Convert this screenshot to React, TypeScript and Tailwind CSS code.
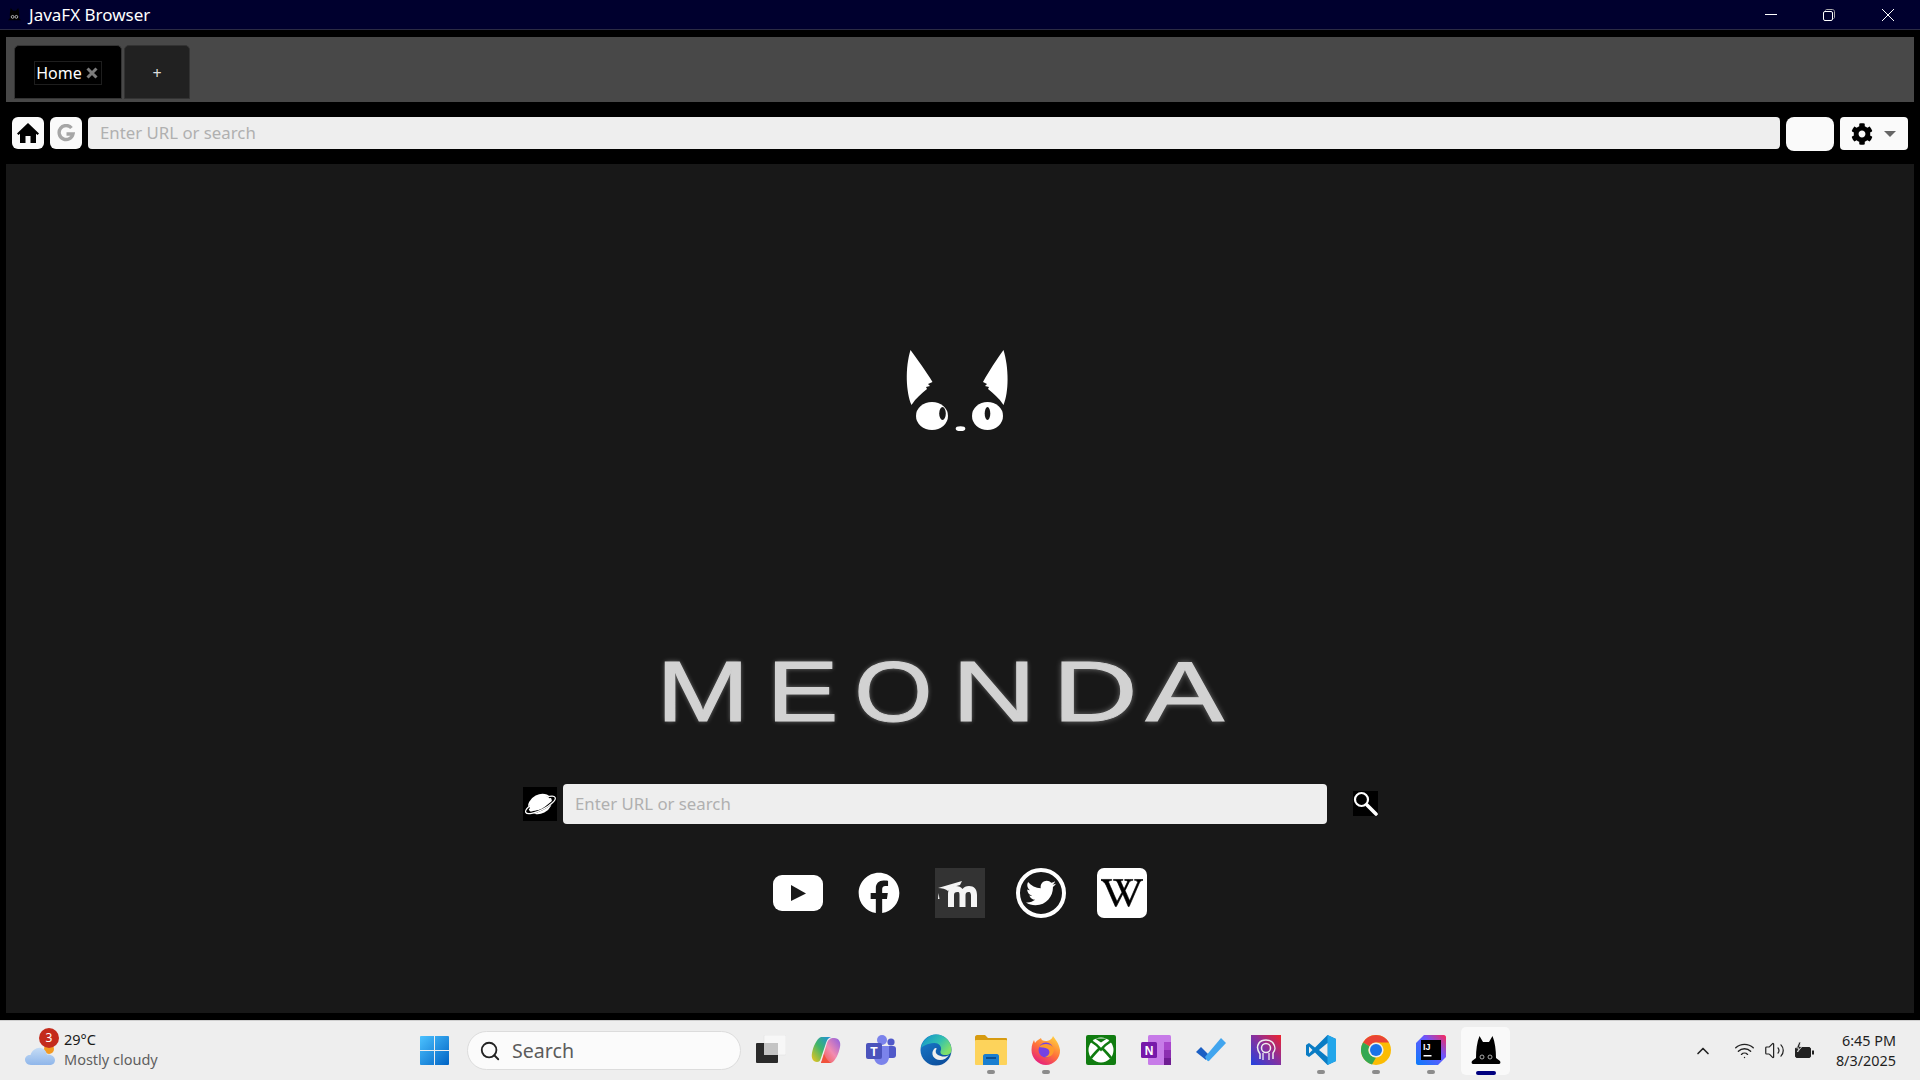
import { ChevronUp, Search, Volume2, Wifi } from "lucide-react";
import { FaCog, FaFacebook, FaTwitter, FaWikipediaW } from "react-icons/fa";
import type { ReactNode } from "react";

const letters = [
  { ch: "M", box: "w-[77px]", fx: "scale-x-[1.3]" },
  { ch: "E", box: "w-[59px] ml-[32px]", fx: "scale-x-[1.25]" },
  { ch: "O", box: "w-[70px] ml-[26px]", fx: "scale-x-[1.17]" },
  { ch: "N", box: "w-[68px] ml-[32px]", fx: "scale-x-[1.36]" },
  { ch: "D", box: "w-[70px] ml-[32px]", fx: "scale-x-[1.37]" },
  { ch: "A", box: "w-[78px] ml-[16px]", fx: "scale-x-[1.37]" },
];

function CatLogo() {
  return (
    <svg width="160" height="110" viewBox="0 0 160 110">
      <path
        d="M30.5 20 C37 29 46 41 52.5 52 L48 54 L50 56 L46 57 L47 59 C42 63 36 68 31.5 75 C26 62 25 38 30.5 20 Z"
        fill="#fff"
      />
      <path
        d="M123.5 20 C117 29 109 41 103 52 L107 54 L105 56 L109 57 L108 59 C113 63 119 68 123.5 75 C129 62 129 38 123.5 20 Z"
        fill="#fff"
      />
      <ellipse cx="52" cy="86" rx="16" ry="14" fill="#fff" />
      <ellipse cx="62.5" cy="83.5" rx="3.3" ry="6.5" fill="#181818" />
      <ellipse cx="107.5" cy="86" rx="15.5" ry="14" fill="#fff" />
      <ellipse cx="107.5" cy="83.5" rx="2.8" ry="6.5" fill="#181818" />
      <ellipse cx="80.5" cy="98.7" rx="4.8" ry="2.4" fill="#fff" />
    </svg>
  );
}

function Planet() {
  return (
    <svg width="34" height="34" viewBox="0 0 34 34">
      <g transform="rotate(-27 17 17)">
        <ellipse cx="17" cy="17" rx="12.5" ry="9.5" fill="#fff" />
        <ellipse cx="17" cy="18" rx="16" ry="4.5" fill="none" stroke="#000" strokeWidth="2.6" />
        <ellipse cx="17" cy="18" rx="16.5" ry="5" fill="none" stroke="#fff" strokeWidth="1.2" />
        <ellipse cx="17" cy="16" rx="11" ry="6" fill="#fff" />
      </g>
    </svg>
  );
}

function Magnifier() {
  return (
    <svg width="25" height="25" viewBox="0 0 25 25">
      <circle cx="8.5" cy="8.5" r="6.5" stroke="#fff" strokeWidth="2.2" fill="none" />
      <path d="M14 14 L23 23" stroke="#fff" strokeWidth="3.6" strokeLinecap="round" />
    </svg>
  );
}

function TaskIcon({ children, dot }: { children: ReactNode; dot?: boolean }) {
  return (
    <div className="relative flex h-full w-[55px] shrink-0 items-center justify-center pb-[1px]">
      {children}
      {dot && <span className="absolute bottom-[6px] h-[4px] w-[8px] rounded-full bg-[#8c8c8c]" />}
    </div>
  );
}

const TaskView = () => (
  <svg width="30" height="30" viewBox="0 0 30 30">
    <rect x="8" y="0" width="22" height="20" rx="1" fill="#f7f7f7" stroke="#dedede" strokeWidth="0.5" />
    <rect x="0" y="8" width="22" height="20" rx="1" fill="#2a2a2a" />
    <rect x="8" y="8" width="14" height="12" fill="#c4c4c4" />
  </svg>
);

const Copilot = () => (
  <svg width="30" height="30" viewBox="0 0 30 30">
    <defs>
      <linearGradient id="cpA" x1="0" y1="1" x2="1" y2="0">
        <stop offset="0" stopColor="#f5c518" />
        <stop offset="0.5" stopColor="#3fb56b" />
        <stop offset="1" stopColor="#1f8fe0" />
      </linearGradient>
      <linearGradient id="cpB" x1="0" y1="1" x2="1" y2="0">
        <stop offset="0" stopColor="#f0523c" />
        <stop offset="0.5" stopColor="#f28bb0" />
        <stop offset="1" stopColor="#8d5fe0" />
      </linearGradient>
    </defs>
    <path d="M20 28 H10 L16 8 C17 5 19 3 23 3 C28 3 30 7 29 12 C28 18 24 27 20 28 Z" fill="url(#cpB)" />
    <path d="M10 2 H20 C17 3 16 5 15 8 L10 23 C9 26 8 27 6 27 C2 27 0 23 1 18 C2 12 6 3 10 2 Z" fill="url(#cpA)" />
    <path d="M13 19 C15 24 18 27 20 28 H10 C11 26 12 23 13 19 Z" fill="#f0523c" />
  </svg>
);

const Teams = () => (
  <svg width="30" height="30" viewBox="0 0 30 30">
    <circle cx="25" cy="7" r="3.6" fill="#5059c9" />
    <rect x="19" y="11" width="11" height="12" rx="3" fill="#5059c9" />
    <circle cx="16" cy="5" r="5" fill="#7b83eb" />
    <path d="M8 11 H23 V22 C23 27 19 30 15.5 30 C11 30 8 26 8 22 Z" fill="#7b83eb" />
    <rect x="0" y="8" width="16" height="16" rx="2" fill="#4b53bc" />
    <text x="8" y="20.5" textAnchor="middle" fontSize="12" fontWeight="700" fill="#fff" fontFamily="Liberation Sans">T</text>
  </svg>
);

const Edge = () => (
  <svg width="32" height="32" viewBox="0 0 32 32">
    <defs>
      <linearGradient id="edgeA" x1="0" y1="0" x2="1" y2="0.6">
        <stop offset="0" stopColor="#0f8fd0" />
        <stop offset="0.6" stopColor="#32c0b0" />
        <stop offset="1" stopColor="#7fe06a" />
      </linearGradient>
      <linearGradient id="edgeB" x1="0" y1="0" x2="0.6" y2="1">
        <stop offset="0" stopColor="#1b80d0" />
        <stop offset="1" stopColor="#0c4f9e" />
      </linearGradient>
    </defs>
    <circle cx="16" cy="16" r="15.5" fill="url(#edgeB)" />
    <path d="M1 14 C3 5 10 .5 16 .5 C25 .5 31.5 8 31.5 16 C31.5 20 28 21.5 24 21 C20 20.5 20 18 21 16 C22 12 18 8.5 14 9 C7 9.5 3 12 1 14 Z" fill="url(#edgeA)" />
    <path d="M14 15 C10 20 14 26 20 26 C24 26 27 24 29 21 C25 23.5 21 22.5 18 21 C15.5 19.5 15 17 16.5 15 C17 13.5 15 13.5 14 15 Z" fill="#eeeeee" />
  </svg>
);

const Files = () => (
  <svg width="32" height="30" viewBox="0 0 32 30">
    <path d="M0 2 C0 1 1 0 2 0 H10 L13 3 H31 C31.5 3 32 3.5 32 4 V8 H0 Z" fill="#d79b10" />
    <rect x="0" y="5" width="32" height="25" rx="1" fill="#fdd35b" />
    <path d="M8 30 V21 C8 20 9 19 10 19 H22 C23 19 24 20 24 21 V30 Z" fill="#1a7fd0" />
    <rect x="11" y="22" width="10" height="2" fill="#0c4f8f" />
  </svg>
);

const Firefox = () => (
  <svg width="30" height="30" viewBox="0 0 30 30">
    <defs>
      <linearGradient id="ffA" x1="0.8" y1="0" x2="0.2" y2="1">
        <stop offset="0" stopColor="#ffd23f" />
        <stop offset="0.5" stopColor="#ff7139" />
        <stop offset="1" stopColor="#e31587" />
      </linearGradient>
    </defs>
    <path d="M22 1 C24 4 28 8 29 15 C29.5 23 23 30 15 30 C7 30 .5 23 .5 15 C.5 10 2 7 3 5 L4 8 C6 5 9 4 10 3 C10 5 12 6 15 6 C17 6 21 5 22 1 Z" fill="url(#ffA)" />
    <circle cx="15" cy="15" r="7.5" fill="#7542e5" />
    <path d="M8 12 C11 8 20 8 23 13 C24 20 18 23 14 22 C18 21 20 17 17 14 C14 12 10 13 8 12 Z" fill="#ff9a2b" />
  </svg>
);

const Xbox = () => (
  <svg width="30" height="30" viewBox="0 0 30 30">
    <rect width="30" height="30" rx="2" fill="#107c10" />
    <circle cx="15" cy="15" r="12.5" fill="#fff" />
    <path d="M9 3.5 C11 5 13 6 15 7.5 C17 6 19 5 21 3.5" fill="#107c10" />
    <path d="M5 6 C10 9 13 12 15 14.5 C17 12 20 9 25 6" stroke="#107c10" strokeWidth="2.6" fill="none" />
    <path d="M5 23 C8 19 12 15 14 13 M25 23 C22 19 18 15 16 13" stroke="#107c10" strokeWidth="2.6" fill="none" />
  </svg>
);

const OneNote = () => (
  <svg width="30" height="30" viewBox="0 0 30 30">
    <rect x="7" y="0" width="23" height="30" rx="1.5" fill="#c77be8" />
    <rect x="23" y="7" width="7" height="8" fill="#a947cc" />
    <rect x="23" y="15" width="7" height="8" fill="#8c2fb0" />
    <rect x="23" y="23" width="7" height="7" fill="#6f1c92" />
    <rect x="0" y="7" width="16" height="16" rx="1.5" fill="#7719aa" />
    <text x="8" y="20" textAnchor="middle" fontSize="12" fontWeight="700" fill="#fff" fontFamily="Liberation Sans">N</text>
  </svg>
);

const Todo = () => (
  <svg width="30" height="30" viewBox="0 0 30 30">
    <path d="M0 18 L5 13 L13 21 L10 26 Z" fill="#1a5fc4" transform="translate(0 -1)" />
    <path d="M9 24 L25 5 L30 10 L13 28 C12 28.5 11 28 9 24 Z" fill="#41a5ee" transform="translate(0 -2)" />
  </svg>
);

const Profile = () => (
  <svg width="30" height="30" viewBox="0 0 30 30">
    <defs>
      <linearGradient id="prA" x1="0" y1="1" x2="1" y2="0">
        <stop offset="0" stopColor="#2143e0" />
        <stop offset="0.55" stopColor="#8c2f9a" />
        <stop offset="1" stopColor="#f0222c" />
      </linearGradient>
    </defs>
    <rect width="30" height="30" fill="url(#prA)" />
    <path d="M9 24 V19 C6 15 6 11 8 8 C11 4 19 4 22 8 C25 12 24 16 22 18 L22 24" stroke="#eee" strokeWidth="1.5" fill="none" />
    <circle cx="15" cy="13" r="4.5" stroke="#eee" strokeWidth="1.5" fill="none" />
    <path d="M12 25 V18 M18 25 V18" stroke="#eee" strokeWidth="1.3" />
  </svg>
);

const VsCode = () => (
  <svg width="30" height="30" viewBox="0 0 30 30">
    <path d="M21.5 0 L30 4 V26 L21.5 30 L9 17.5 L3 22 L0 20 V10 L3 8 L9 12.5 Z" fill="#0a7cc4" />
    <path d="M21.5 0 L30 4 V26 L21.5 30 Z" fill="#23a6ea" />
    <path d="M21.5 8 L13 15 L21.5 22 Z" fill="#eeeeee" />
    <path d="M3 11.5 L6.5 15 L3 18.5 Z" fill="#eeeeee" />
  </svg>
);

const Chrome = () => (
  <svg width="30" height="30" viewBox="0 0 30 30">
    <circle cx="15" cy="15" r="15" fill="#fbbc04" />
    <path d="M15 0 A15 15 0 0 1 28 7.5 H15 A7.5 7.5 0 0 0 8.5 11.3 L2 7.5 A15 15 0 0 1 15 0 Z" fill="#ea4335" />
    <path d="M2 7.5 L8.5 11.3 A7.5 7.5 0 0 0 15 22.5 L11 29.5 A15 15 0 0 1 2 7.5 Z" fill="#34a853" />
    <circle cx="15" cy="15" r="7.6" fill="#eee" />
    <circle cx="15" cy="15" r="6" fill="#1a73e8" />
  </svg>
);

const IntelliJ = () => (
  <svg width="30" height="30" viewBox="0 0 30 30">
    <defs>
      <linearGradient id="ijA" x1="0" y1="1" x2="1" y2="0">
        <stop offset="0" stopColor="#087cfa" />
        <stop offset="0.6" stopColor="#6b57ff" />
        <stop offset="1" stopColor="#fe2857" />
      </linearGradient>
    </defs>
    <path d="M8 0 H28 C29 0 30 1 30 2 V22 L22 30 H2 C1 30 0 29 0 28 V8 Z" fill="url(#ijA)" />
    <rect x="5" y="5" width="20" height="20" fill="#000" />
    <text x="7" y="15" fontSize="9" fontWeight="700" fill="#fff" fontFamily="Liberation Sans">IJ</text>
    <rect x="7.5" y="20" width="8" height="1.5" fill="#fff" />
  </svg>
);

const CatTile = () => (
  <svg width="30" height="30" viewBox="0 0 30 30">
    <path d="M8.5 0 L12 6 H18 L21.5 0 C24 6 25 14 25 22 L29 25 C30 27 29 28 28 28 H2 C1 28 0 27 1 25 L5 22 C5 14 6 6 8.5 0 Z" fill="#000" />
    <circle cx="11" cy="21" r="2" fill="none" stroke="#bbb" strokeWidth="0.9" />
    <circle cx="19" cy="21" r="2" fill="none" stroke="#bbb" strokeWidth="0.9" />
  </svg>
);

export default function App() {
  return (
    <div className="flex h-screen w-screen flex-col overflow-hidden bg-black font-['Noto_Sans',sans-serif]">
      {/* title bar */}
      <div className="flex h-[30px] shrink-0 items-center border-b border-[#2b2b44] bg-[#00002e] pl-[7px]">
        <svg width="15" height="14" viewBox="0 0 30 30">
          <path d="M7 0 L12 6 H18 L23 0 C25 6 25 14 25 22 L29 26 H1 L5 22 C5 14 5 6 7 0 Z" fill="#000" />
          <circle cx="11" cy="19" r="3" fill="none" stroke="#bbb" strokeWidth="2" />
          <circle cx="19" cy="19" r="3" fill="none" stroke="#bbb" strokeWidth="2" />
        </svg>
        <span className="ml-[7px] text-[17px] leading-none text-white">JavaFX Browser</span>
        <div className="ml-auto flex items-center pr-[26px]">
          <svg width="12" height="12" viewBox="0 0 12 12">
            <path d="M0 5.5 H12" stroke="#fff" strokeWidth="1" />
          </svg>
          <svg width="12" height="12" viewBox="0 0 12 12" className="ml-[46px]">
            <rect x="0.5" y="2.5" width="9" height="9" rx="1.5" fill="none" stroke="#fff" />
            <path d="M2.5 1.5 C2.5 .8 3 .5 3.5 .5 H9.5 C10.5 .5 11.5 1.5 11.5 2.5 V8.5 C11.5 9 11 9.5 10.5 9.5" fill="none" stroke="#aaa" />
          </svg>
          <svg width="12" height="12" viewBox="0 0 12 12" className="ml-[47px]">
            <path d="M0 0 L12 12 M12 0 L0 12" stroke="#fff" strokeWidth="1" />
          </svg>
        </div>
      </div>

      {/* tab pane */}
      <div className="mx-[6px] mt-[7px] flex h-[65px] shrink-0 items-start gap-[2px] bg-[#484848] pl-[8px] pt-[8px]">
        <div className="flex h-[54px] w-[108px] items-center justify-center rounded-t-[5px] border border-[#333] bg-black pt-[2px]">
          <div className="flex h-[24px] items-center border border-[#1e1e1e] pl-px pr-[3px]">
            <span className="text-[16px] leading-none text-white">Home</span>
            <svg width="12" height="12" viewBox="0 0 12 12" className="ml-[4px]">
              <path d="M1.5 1.5 L10.5 10.5 M10.5 1.5 L1.5 10.5" stroke="#7c7c7c" strokeWidth="3" />
            </svg>
          </div>
        </div>
        <div className="flex h-[54px] w-[66px] items-center justify-center rounded-t-[5px] border border-[#333] bg-[#212121] pt-[2px] text-[16px] leading-none text-[#ddd]">
          +
        </div>
      </div>

      {/* toolbar */}
      <div className="mt-[15px] flex h-[34px] shrink-0 items-start pl-[12px] pr-[12px]">
        <button className="flex h-[32px] w-[32px] items-center justify-center rounded-[6px] bg-[#fafafa]">
          <svg width="22" height="20" viewBox="0 0 22 20">
            <path d="M11 0 L22 10.5 L20.5 12 L19 10.8 V20 H13.5 V13 H8.5 V20 H3 V10.8 L1.5 12 L0 10.5 Z" fill="#000" />
          </svg>
        </button>
        <button className="ml-[6px] flex h-[32px] w-[32px] items-center justify-center rounded-[6px] bg-[#fafafa]">
          <svg width="18" height="18" viewBox="0 0 18 18">
            <path d="M14.5 4 A7 7 0 1 0 16 10 H9.5" fill="none" stroke="#a6a6a6" strokeWidth="3.4" />
          </svg>
        </button>
        <input
          placeholder="Enter URL or search"
          className="ml-[6px] h-[32px] min-w-0 flex-1 rounded-[4px] bg-[#eeeeee] pb-[2px] pl-[12px] pr-[13px] text-[16.8px] outline-none placeholder:text-[#b0b0b0]"
        />
        <button className="ml-[6px] h-[34px] w-[48px] rounded-[8px] bg-[#fafafa]" />
        <button className="ml-[6px] flex h-[33px] w-[68px] items-center rounded-[4px] bg-[#fafafa] pl-[11px]">
          <FaCog className="h-[22px] w-[22px] text-black" />
          <span className="ml-[11px] h-0 w-0 border-x-[6px] border-t-[6px] border-x-transparent border-t-[#666]" />
        </button>
      </div>

      {/* home page */}
      <div className="mx-[6px] mb-[7px] mt-[13px] flex min-h-0 flex-1 flex-col items-center bg-[#181818] pt-[166px]">
        <CatLogo />

        <div className="mt-[220px] flex w-full pl-[658px]">
          {letters.map((l) => (
            <div key={l.ch} className={`flex h-[62px] shrink-0 items-center justify-center ${l.box}`}>
              <span
                className={`inline-block font-['Liberation_Sans',sans-serif] text-[86px] leading-[62px] text-[#d2d2d2] [-webkit-text-stroke:1px_#d2d2d2] [text-shadow:0_0_5px_rgba(255,255,255,0.45)] ${l.fx}`}
              >
                {l.ch}
              </span>
            </div>
          ))}
        </div>

        <div className="mt-[62px] flex h-[40px] w-full items-center pl-[517px]">
          <div className="flex h-[34px] w-[34px] items-center justify-center bg-black">
            <Planet />
          </div>
          <input
            placeholder="Enter URL or search"
            className="ml-[6px] h-[40px] w-[764px] rounded-[4px] bg-[#eeeeee] pb-[2px] pl-[12px] pr-[12px] text-[16.8px] outline-none placeholder:text-[#b0b0b0]"
          />
          <div className="mb-[1px] ml-[26px] flex h-[25px] w-[25px] items-center justify-center bg-black">
            <Magnifier />
          </div>
        </div>

        <div className="mt-[44px] flex h-[50px] gap-[31px]">
          <div className="flex w-[50px] items-center justify-center">
            <svg width="50" height="36" viewBox="0 0 50 36">
              <rect width="50" height="36" rx="9" fill="#fff" />
              <path d="M18 10 L33 18.5 L18 26 Z" fill="#181818" />
            </svg>
          </div>
          <div className="flex w-[50px] items-center justify-center">
            <FaFacebook className="h-[42px] w-[42px] text-white" />
          </div>
          <div className="flex w-[50px] items-center justify-center bg-[#333333]">
            <svg width="50" height="50" viewBox="0 0 50 50">
              <path d="M13 39 V26 C13 20 17 18 20.5 18 C24 18 26 19 27.5 21 C29 19 31 18 34 18 C39 18 42 21 42 27 V39 H36 V27 C35.5 24.5 35 24 33.5 24 C31.5 24 30.5 25 30.5 27 V39 H24.5 V27 C24.5 24.5 24 24 22.5 24 C20 24 19 25 19 27 V39 Z" fill="#f5f5f5" />
              <path d="M3 20 L27 13 L25 17 L18 19 L13 23 C11 21 7 20 3 20 Z" fill="#f5f5f5" />
              <path d="M3.5 25 L4.5 31 L3 31 Z" fill="#f5f5f5" />
            </svg>
          </div>
          <div className="flex w-[50px] items-center justify-center rounded-full border-[4px] border-white">
            <FaTwitter className="h-[30px] w-[30px] text-white" />
          </div>
          <div className="flex w-[50px] items-center justify-center rounded-[7px] bg-white">
            <FaWikipediaW className="h-[36px] w-[42px] text-black [stroke-width:10]" />
          </div>
        </div>
      </div>

      {/* windows taskbar */}
      <div className="flex h-[60px] shrink-0 items-center border-t border-[#cfcfcf] bg-[#eeeeee]">
        <div className="flex w-[420px] shrink-0 items-center pl-[25px]">
          <div className="relative h-[34px] w-[39px]">
            <svg width="30" height="24" viewBox="0 0 30 24" className="mt-[9px]">
              <defs>
                <linearGradient id="cloud" x1="0" y1="0" x2="0" y2="1">
                  <stop offset="0" stopColor="#c5dcf5" />
                  <stop offset="1" stopColor="#8fb6ea" />
                </linearGradient>
              </defs>
              <circle cx="24" cy="6" r="5" fill="#f39a22" />
              <path d="M6 22 C2 22 0 19 0 16.5 C0 13.5 3 11.5 5.5 12 C7 7 12 4 16 5 C20 6 21.5 9 22 11.5 C26 11 30 13.5 30 17 C30 20 28 22 24 22 Z" fill="url(#cloud)" />
            </svg>
            <span className="absolute left-[14px] top-[-6px] flex h-[20px] w-[20px] items-center justify-center rounded-full bg-[#c42b1c] text-[12px] leading-none text-white">
              3
            </span>
          </div>
          <div className="mb-[4px] text-[14.5px] leading-[20px]">
            <div className="text-[#1a1a1a]">29°C</div>
            <div className="text-[#5f5f5f]">Mostly cloudy</div>
          </div>
        </div>

        <svg width="29" height="29" viewBox="0 0 29 29" className="shrink-0">
          <defs>
            <linearGradient id="win" x1="0" y1="0" x2="1" y2="1">
              <stop offset="0" stopColor="#4cc2ff" />
              <stop offset="1" stopColor="#0063c4" />
            </linearGradient>
          </defs>
          <path d="M0 1 C0 .5 .5 0 1 0 H14 V14 H0 Z M15 0 H28 C28.5 0 29 .5 29 1 V14 H15 Z M0 15 H14 V29 H1 C.5 29 0 28.5 0 28 Z M15 15 H29 V28 C29 28.5 28.5 29 28 29 H15 Z" fill="url(#win)" />
        </svg>

        <div className="ml-[18px] flex h-[39px] w-[274px] shrink-0 items-center rounded-full border border-[#dcdcdc] bg-[#fbfbfb] pl-[11px]">
          <Search className="h-[22px] w-[22px] text-[#222]" strokeWidth={2} />
          <span className="ml-[11px] text-[19.6px] leading-none text-[#5c5c5c]">Search</span>
        </div>

        <div className="ml-[2px] flex h-full items-center">
          <TaskIcon><TaskView /></TaskIcon>
          <TaskIcon><Copilot /></TaskIcon>
          <TaskIcon><Teams /></TaskIcon>
          <TaskIcon><Edge /></TaskIcon>
          <TaskIcon dot><Files /></TaskIcon>
          <TaskIcon dot><Firefox /></TaskIcon>
          <TaskIcon><Xbox /></TaskIcon>
          <TaskIcon><OneNote /></TaskIcon>
          <TaskIcon><Todo /></TaskIcon>
          <TaskIcon><Profile /></TaskIcon>
          <TaskIcon dot><VsCode /></TaskIcon>
          <TaskIcon dot><Chrome /></TaskIcon>
          <TaskIcon dot><IntelliJ /></TaskIcon>
          <div className="relative flex h-full w-[55px] shrink-0 items-center justify-center">
            <div className="flex h-[48px] w-[49px] items-center justify-center rounded-[5px] bg-[#f9f9f9]">
              <CatTile />
            </div>
            <span className="absolute bottom-[5px] h-[4px] w-[20px] rounded-full bg-[#00007f]" />
          </div>
        </div>

        <div className="ml-auto flex items-center pr-[24px]">
          <ChevronUp className="h-[20px] w-[20px] text-[#222]" strokeWidth={2} />
          <Wifi className="ml-[21px] h-[21px] w-[21px] text-[#222]" strokeWidth={1.6} />
          <Volume2 className="ml-[9px] h-[21px] w-[21px] text-[#222]" strokeWidth={1.4} />
          <svg width="20" height="18" viewBox="0 0 20 18" className="ml-[9px]">
            <rect x="1.5" y="5.5" width="15" height="10" rx="1.5" fill="#222" stroke="#222" />
            <rect x="18" y="8.5" width="2" height="4" fill="#222" />
            <path d="M5 0 L2.5 6 H5 L3.5 10 L8 4.5 H5.5 L7 0 Z" fill="#222" stroke="#eee" strokeWidth="0.8" />
          </svg>
          <div className="ml-[22px] text-right text-[14.4px] leading-[20px] text-[#1f1f1f]">
            <div>6:45 PM</div>
            <div>8/3/2025</div>
          </div>
        </div>
      </div>
    </div>
  );
}
